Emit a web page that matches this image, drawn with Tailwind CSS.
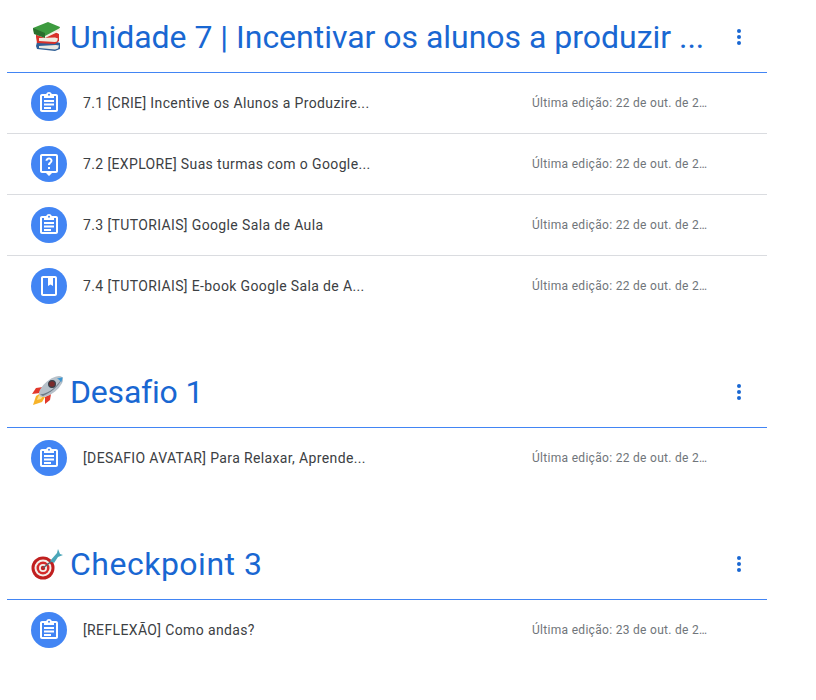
<!DOCTYPE html>
<html lang="pt-BR">
<head>
  <meta charset="UTF-8">
  <title>Unidade 7</title>
  <script src="https://cdn.jsdelivr.net/npm/@tailwindcss/browser@4"></script>
</head>
<body class="bg-white font-['Roboto',sans-serif] h-[700px] overflow-hidden">
  <div class="w-[760px] ml-[7px]">

    <!-- Unidade 7 -->
    <section class="mb-[39px]">
      <div class="h-[73px] border-b border-[#4285f4] flex items-center pl-6 pr-4 pt-[2px]">
        <svg class="w-[32px] h-[32px] mr-[7px] shrink-0" viewBox="0 0 32 32">
          <path d="M6 21l17-1 6 2v6l-5 2-18-2-1-3z" fill="#2f5f96"/>
          <path d="M8 25l17-1 3 .5-1 3-3 1-16-1.500z" fill="#e9e9e2"/>
          <path d="M5 11l17-1 6 3v7l-4 3-18-1-1-6z" fill="#d8322a"/>
          <path d="M8 17l16-.5 3 1-1 3-2 .5-16-1z" fill="#f1ece0"/>
          <path d="M2 7L17 1l12 5-1 3-14 7-11-4z" fill="#3d9b3f"/>
          <path d="M3 11l11 4 15-8v3l-15 7-11-4z" fill="#f2efe3"/>
          <path d="M2 7l12 5 0 5-11-4z" fill="#2a6f2d"/>
        </svg>
        <h2 class="flex-1 min-w-0 truncate text-[32px] leading-[40px] tracking-[-0.02px] text-[#1967d2]">Unidade 7 | Incentivar os alunos a produzir ...</h2>
        <svg class="w-6 h-6 ml-[12px] shrink-0 text-[#1967d2]" viewBox="0 0 24 24" fill="currentColor"><circle cx="12" cy="6" r="2"/><circle cx="12" cy="12" r="2"/><circle cx="12" cy="18" r="2"/></svg>
      </div>
      <div class="h-[61px] border-b border-[#dadce0] flex items-center pl-6">
        <span class="w-9 h-9 rounded-full bg-[#4285f4] flex items-center justify-center shrink-0">
          <svg class="w-6 h-6" viewBox="0 0 24 24" fill="#fff"><path d="M19 3h-4.200C14.400 1.800 13.300 1 12 1s-2.400.8-2.800 2H5c-1.100 0-2 .9-2 2v14c0 1.100.9 2 2 2h14c1.100 0 2-.9 2-2V5c0-1.100-.9-2-2-2zm-7-.2a1 1 0 1 1 0 2 1 1 0 0 1 0-2zM19 19H5V5h2v2h10V5h2v14zM7 9h10v2H7zm0 3.500h10v2H7zM7 16h7v2H7z"/></svg>
        </span>
        <p class="ml-4 w-[296px] whitespace-nowrap text-sm tracking-[0.37px] text-[#3c4043]">7.1 [CRIE] Incentive os Alunos a Produzire...</p>
        <p class="ml-[153px] whitespace-nowrap text-xs tracking-[0.3px] text-[#70757a]">Última edição: 22 de out. de 2…</p>
      </div>
      <div class="h-[61px] border-b border-[#dadce0] flex items-center pl-6">
        <span class="w-9 h-9 rounded-full bg-[#4285f4] flex items-center justify-center shrink-0">
          <svg class="w-6 h-6" viewBox="0 0 24 24" fill="#fff"><path d="M5 2h14c1.100 0 2 .9 2 2v15c0 1.100-.9 2-2 2h-4l-3 3-3-3H5c-1.100 0-2-.9-2-2V4c0-1.100.9-2 2-2zm0 2v15h14V4H5z"/><path d="M11 15h2v2h-2zM12 5.500c-2 0-3.500 1.400-3.500 3.300h2c0-.8.6-1.400 1.500-1.400s1.500.6 1.500 1.300c0 1.500-2.500 1.500-2.500 4.300h2c0-1.800 2.500-2.200 2.500-4.300 0-1.900-1.500-3.200-3.500-3.200z"/></svg>
        </span>
        <p class="ml-4 w-[296px] whitespace-nowrap text-sm tracking-[0.37px] text-[#3c4043]">7.2 [EXPLORE] Suas turmas com o Google...</p>
        <p class="ml-[153px] whitespace-nowrap text-xs tracking-[0.3px] text-[#70757a]">Última edição: 22 de out. de 2…</p>
      </div>
      <div class="h-[61px] border-b border-[#dadce0] flex items-center pl-6">
        <span class="w-9 h-9 rounded-full bg-[#4285f4] flex items-center justify-center shrink-0">
          <svg class="w-6 h-6" viewBox="0 0 24 24" fill="#fff"><path d="M19 3h-4.200C14.400 1.800 13.300 1 12 1s-2.400.8-2.800 2H5c-1.100 0-2 .9-2 2v14c0 1.100.9 2 2 2h14c1.100 0 2-.9 2-2V5c0-1.100-.9-2-2-2zm-7-.2a1 1 0 1 1 0 2 1 1 0 0 1 0-2zM19 19H5V5h2v2h10V5h2v14zM7 9h10v2H7zm0 3.500h10v2H7zM7 16h7v2H7z"/></svg>
        </span>
        <p class="ml-4 w-[296px] whitespace-nowrap text-sm tracking-[0.37px] text-[#3c4043]">7.3 [TUTORIAIS] Google Sala de Aula</p>
        <p class="ml-[153px] whitespace-nowrap text-xs tracking-[0.3px] text-[#70757a]">Última edição: 22 de out. de 2…</p>
      </div>
      <div class="h-[60px] flex items-center pl-6">
        <span class="w-9 h-9 rounded-full bg-[#4285f4] flex items-center justify-center shrink-0">
          <svg class="w-6 h-6" viewBox="0 0 24 24" fill="#fff"><path d="M6 2h12c1.100 0 2 .9 2 2v16c0 1.100-.9 2-2 2H6c-1.100 0-2-.9-2-2V4c0-1.100.9-2 2-2zm0 2v16h12V4h-2v8l-2.500-1.500L11 12V4H6z"/></svg>
        </span>
        <p class="ml-4 w-[296px] whitespace-nowrap text-sm tracking-[0.37px] text-[#3c4043]">7.4 [TUTORIAIS] E-book Google Sala de A...</p>
        <p class="ml-[153px] whitespace-nowrap text-xs tracking-[0.3px] text-[#70757a]">Última edição: 22 de out. de 2…</p>
      </div>
    </section>

    <!-- Desafio 1 -->
    <section class="mb-[39px]">
      <div class="h-[73px] border-b border-[#4285f4] flex items-center pl-6 pr-4 pt-[2px]">
        <svg class="w-[32px] h-[32px] mr-[7px] shrink-0" viewBox="0 0 32 32">
          <path d="M12 11L5 12 1 18l8-1z" fill="#e2382b"/>
          <path d="M20 18l-1 6-5 4 0-7z" fill="#e2382b"/>
          <path d="M10 17l-5 3-3 9 9-3 3-5z" fill="#f7b329"/>
          <path d="M9 18l-2 3-1 3 4-1 2-3z" fill="#fbe08a"/>
          <ellipse cx="20" cy="10.500" rx="14.500" ry="6.500" transform="rotate(-39 20 10.500)" fill="#b7c1ca"/>
          <path d="M31.500 1.500C29 8 23 15 12 20l-3-1.500C20 17 27 9 31.500 1.500z" fill="#6d7a86"/>
          <path d="M26 2.500l5.700-1.300-1.500 5.300c-.8-1.700-2.300-3.200-4.200-4z" fill="#3b97d3"/>
          <circle cx="21" cy="8" r="3.400" fill="#7a2b2b" stroke="#37434d" stroke-width="1.200"/>
        </svg>
        <h2 class="flex-1 min-w-0 truncate text-[32px] leading-[40px] tracking-[-0.2px] text-[#1967d2]">Desafio 1</h2>
        <svg class="w-6 h-6 ml-[12px] shrink-0 text-[#1967d2]" viewBox="0 0 24 24" fill="currentColor"><circle cx="12" cy="6" r="2"/><circle cx="12" cy="12" r="2"/><circle cx="12" cy="18" r="2"/></svg>
      </div>
      <div class="h-[60px] flex items-center pl-6">
        <span class="w-9 h-9 rounded-full bg-[#4285f4] flex items-center justify-center shrink-0">
          <svg class="w-6 h-6" viewBox="0 0 24 24" fill="#fff"><path d="M19 3h-4.200C14.400 1.800 13.300 1 12 1s-2.400.8-2.800 2H5c-1.100 0-2 .9-2 2v14c0 1.100.9 2 2 2h14c1.100 0 2-.9 2-2V5c0-1.100-.9-2-2-2zm-7-.2a1 1 0 1 1 0 2 1 1 0 0 1 0-2zM19 19H5V5h2v2h10V5h2v14zM7 9h10v2H7zm0 3.500h10v2H7zM7 16h7v2H7z"/></svg>
        </span>
        <p class="ml-4 w-[296px] whitespace-nowrap text-sm tracking-[0.37px] text-[#3c4043]">[DESAFIO AVATAR] Para Relaxar, Aprende...</p>
        <p class="ml-[153px] whitespace-nowrap text-xs tracking-[0.3px] text-[#70757a]">Última edição: 22 de out. de 2…</p>
      </div>
    </section>

    <!-- Checkpoint 3 -->
    <section>
      <div class="h-[73px] border-b border-[#4285f4] flex items-center pl-6 pr-4 pt-[2px]">
        <svg class="w-[32px] h-[32px] mr-[7px] shrink-0" viewBox="0 0 32 32">
          <circle cx="12" cy="20" r="11.500" fill="#c01f1f"/>
          <circle cx="12" cy="20" r="8.500" fill="#f4f0ea"/>
          <circle cx="12" cy="20" r="6.500" fill="#d42a2a"/>
          <circle cx="12" cy="20" r="4" fill="#f4f0ea"/>
          <circle cx="12" cy="20" r="2.200" fill="#c01f1f"/>
          <path d="M12 20L22 12" stroke="#56636d" stroke-width="1.500"/>
          <path d="M19 13l7-8 1-4 2 5 3 1-5 2-4 6z" fill="#4aa6b8"/>
        </svg>
        <h2 class="flex-1 min-w-0 truncate text-[32px] leading-[40px] tracking-[0.5px] text-[#1967d2]">Checkpoint 3</h2>
        <svg class="w-6 h-6 ml-[12px] shrink-0 text-[#1967d2]" viewBox="0 0 24 24" fill="currentColor"><circle cx="12" cy="6" r="2"/><circle cx="12" cy="12" r="2"/><circle cx="12" cy="18" r="2"/></svg>
      </div>
      <div class="h-[60px] flex items-center pl-6">
        <span class="w-9 h-9 rounded-full bg-[#4285f4] flex items-center justify-center shrink-0">
          <svg class="w-6 h-6" viewBox="0 0 24 24" fill="#fff"><path d="M19 3h-4.200C14.400 1.800 13.300 1 12 1s-2.400.8-2.800 2H5c-1.100 0-2 .9-2 2v14c0 1.100.9 2 2 2h14c1.100 0 2-.9 2-2V5c0-1.100-.9-2-2-2zm-7-.2a1 1 0 1 1 0 2 1 1 0 0 1 0-2zM19 19H5V5h2v2h10V5h2v14zM7 9h10v2H7zm0 3.500h10v2H7zM7 16h7v2H7z"/></svg>
        </span>
        <p class="ml-4 w-[296px] whitespace-nowrap text-sm tracking-[0.37px] text-[#3c4043]">[REFLEXÃO] Como andas?</p>
        <p class="ml-[153px] whitespace-nowrap text-xs tracking-[0.3px] text-[#70757a]">Última edição: 23 de out. de 2…</p>
      </div>
    </section>

  </div>
</body>
</html>
